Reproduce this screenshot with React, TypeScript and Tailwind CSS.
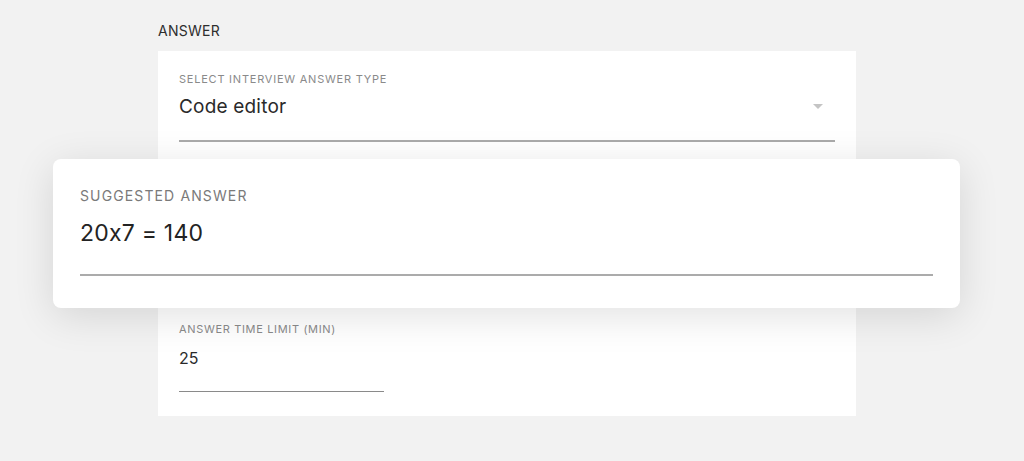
const font = { fontFamily: "Inter, 'Open Sans', sans-serif", fontFeatureSettings: "'calt' 0" };

function Field({
  label,
  value,
  className,
  arrow,
}: {
  label: string;
  value: string;
  className?: string;
  arrow?: boolean;
}) {
  return (
    <div className={className}>
      <div className="text-[11px] leading-[14px] tracking-[0.07em] text-[#8a8a8a]">{label}</div>
      <div className="relative mt-[10px] flex h-[46px] items-start border-b-2 border-[#ababab]">
        <span className="text-[19px] leading-[22px] tracking-[0.01em] text-[#2a2a2a]">{value}</span>
        {arrow && (
          <span className="absolute right-[12px] top-[8px] h-0 w-0 border-x-[5px] border-t-[5px] border-x-transparent border-t-[#c4c4c4]" />
        )}
      </div>
    </div>
  );
}

export default function App() {
  return (
    <div className="relative h-[461px] w-[1024px] overflow-hidden bg-[#f2f2f2]" style={font}>
      <div className="ml-[158px] w-[698px] pt-[22px]">
        <div className="text-[14px] leading-[18px] tracking-[0.02em] text-[#2e2e2e]">ANSWER</div>
        <div className="mt-[11px] h-[365px] bg-white px-[21px] pt-[21px]">
          <Field label="SELECT INTERVIEW ANSWER TYPE" value="Code editor" arrow />
          <div className="mt-[180px] w-[205px]">
            <div className="text-[11px] leading-[14px] tracking-[0.06em] text-[#8a8a8a]">
              ANSWER TIME LIMIT (MIN)
            </div>
            <div className="mt-[12px] h-[44px] border-b border-[#8a8a8a] text-[16px] leading-[20px] text-[#2a2a2a]">
              25
            </div>
          </div>
        </div>
      </div>

      <div className="absolute left-[53px] top-[159px] h-[149px] w-[907px] rounded-[8px] bg-white px-[27px] pt-[28px] shadow-[0_8px_40px_rgba(0,0,0,0.12)]">
        <div className="text-[14px] leading-[18px] tracking-[0.08em] text-[#7a7a7a]">SUGGESTED ANSWER</div>
        <div className="mt-[15px] h-[56px] border-b-2 border-[#ababab] text-[23px] leading-[26px] tracking-[0.01em] text-[#232323]">
          20x7 = 140
        </div>
      </div>
    </div>
  );
}
